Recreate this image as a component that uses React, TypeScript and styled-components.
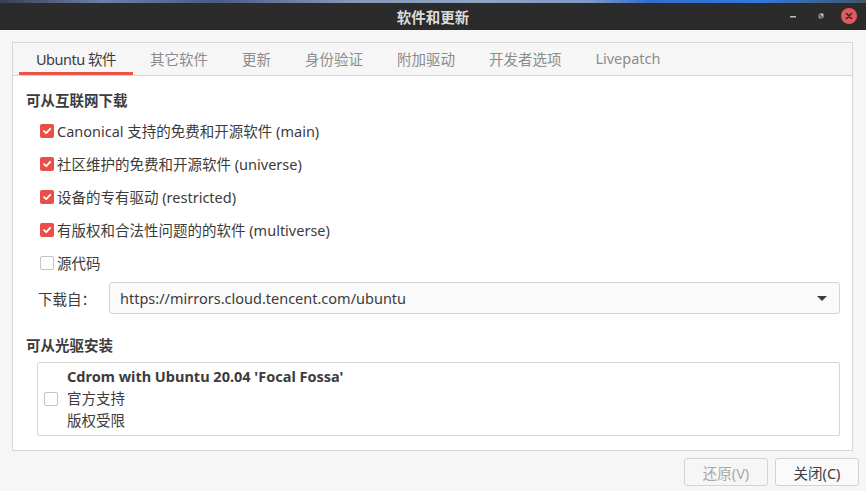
import React from "react";
import styled, { createGlobalStyle } from "styled-components";

const Global = createGlobalStyle`
  html, body { margin: 0; padding: 0; background: #f6f6f6; }
  body { font-family: "Noto Sans", "Noto Sans CJK SC", sans-serif; }
  #root { width: 866px; height: 491px; overflow: hidden; }
`;

const Win = styled.div`
  width: 866px;
  height: 491px;
  display: flex;
  flex-direction: column;
  background: #f6f6f6;
  font-family: "Noto Sans", "Noto Sans CJK SC", sans-serif;
  font-size: 14.5px;
  color: #3c3c3c;
`;

const Desktop = styled.div`
  height: 3px;
  background: linear-gradient(90deg, #3a3f55 0%, #6d7fa8 12%, #4a5a86 25%, #8796b5 40%, #8fa5c2 55%, #7f99c6 68%, #2f6fcf 75%, #3478d9 88%, #40566c 100%);
`;

const TitleBar = styled.div`
  height: 27px;
  background: #2b2b2b;
  position: relative;
  display: flex;
  align-items: center;
  justify-content: center;
`;

const Title = styled.div`
  color: #dcdcdc;
  font-family: "Noto Sans CJK SC", sans-serif;
  font-weight: 700;
  font-size: 14.5px;
`;

const Controls = styled.div`
  position: absolute;
  right: 9px;
  top: 4px;
  display: flex;
  align-items: center;
  gap: 12px;
  height: 18px;
`;

const Ctl = styled.div`
  width: 16px;
  height: 16px;
  display: flex;
  align-items: center;
  justify-content: center;
`;

const CloseBtn = styled.div`
  width: 16px;
  height: 16px;
  border-radius: 50%;
  background: #e25a5f;
  display: flex;
  align-items: center;
  justify-content: center;
`;

const Body = styled.div`
  flex: 1;
  display: flex;
  flex-direction: column;
  padding: 12px 7px 0 12px;
`;

const Notebook = styled.div`
  height: 407px;
  margin-right: 6px;
  border: 1px solid #d6d6d6;
  display: flex;
  flex-direction: column;
  background: #ffffff;
`;

const TabStrip = styled.div`
  height: 32px;
  background: #f6f6f6;
  border-bottom: 1px solid #d6d6d6;
  display: flex;
  padding-left: 6px;
`;

const Tab = styled.div<{ $active?: boolean }>`
  padding: 0 17px 2px;
  display: flex;
  align-items: center;
  font-size: 14.5px;
  color: ${(p) => (p.$active ? "#3c3c3c" : "#8c8c8c")};
  box-shadow: ${(p) => (p.$active ? "inset 0 -3px 0 #ed5448" : "none")};
  letter-spacing: ${(p) => (p.$active ? "-0.5px" : "0")};
`;

const Page = styled.div`
  flex: 1;
  display: flex;
  flex-direction: column;
  padding: 13px 12px 0 13px;
`;

const Heading = styled.div`
  font-weight: 700;
  font-size: 14.5px;
  color: #3c3c3c;
  height: 22px;
  line-height: 22px;
`;

const Options = styled.div`
  display: flex;
  flex-direction: column;
  padding-left: 14px;
  padding-top: 3px;
`;

const OptRow = styled.div`
  height: 33px;
  display: flex;
  align-items: center;
  gap: 3px;
`;

const Box = styled.div<{ $on?: boolean }>`
  width: 14px;
  height: 14px;
  box-sizing: border-box;
  border-radius: 2px;
  background: ${(p) => (p.$on ? "#ea4f47" : "#ffffff")};
  border: ${(p) => (p.$on ? "none" : "1px solid #c4c4c4")};
  display: flex;
  align-items: center;
  justify-content: center;
  flex: none;
`;

const SourceRow = styled.div`
  display: flex;
  align-items: center;
  margin-top: 3px;
  height: 32px;
  padding-left: 12px;
  gap: 14px;
`;

const Label = styled.div`
  width: 57px;
  white-space: nowrap;
`;

const Combo = styled.div`
  flex: 1;
  height: 32px;
  box-sizing: border-box;
  border: 1px solid #d3d3d3;
  border-radius: 3px;
  background: #fafafa;
  display: flex;
  align-items: center;
  padding: 0 10px 0 10px;
  justify-content: space-between;
`;

const Arrow = styled.div`
  width: 0;
  height: 0;
  border-left: 5px solid transparent;
  border-right: 5px solid transparent;
  border-top: 5px solid #3c3c3c;
  margin-right: 2px;
`;

const Heading2 = styled(Heading)`
  margin-top: 20px;
`;

const CdBox = styled.div`
  margin: 6px 0 0 11px;
  height: 74px;
  box-sizing: border-box;
  border: 1px solid #d6d6d6;
  border-radius: 2px;
  display: flex;
  align-items: center;
  padding-left: 6px;
  gap: 9px;
`;

const CdLines = styled.div`
  display: flex;
  flex-direction: column;
  line-height: 22px;
  padding-bottom: 3px;
`;

const Bold = styled.div`
  font-weight: 700;
`;

const ButtonRow = styled.div`
  display: flex;
  justify-content: flex-end;
  gap: 7px;
  padding-top: 7px;
`;

const Btn = styled.button<{ $disabled?: boolean }>`
  width: 84px;
  height: 28px;
  box-sizing: border-box;
  border: 1px solid #d3d3d3;
  border-radius: 3px;
  background: ${(p) => (p.$disabled ? "#f6f6f6" : "#fafafa")};
  color: ${(p) => (p.$disabled ? "#a8a8a8" : "#3c3c3c")};
  font-family: "Noto Sans", "Noto Sans CJK SC", sans-serif;
  font-size: 14.5px;
  padding: 0;
`;

const Check = () => (
  <svg width="10" height="10" viewBox="0 0 10 10">
    <path d="M2 5.2 L4.2 7.2 L8.2 2.8" stroke="#fff" strokeWidth="1.8" fill="none" strokeLinecap="round" strokeLinejoin="round" />
  </svg>
);

const tabs = ["Ubuntu 软件", "其它软件", "更新", "身份验证", "附加驱动", "开发者选项", "Livepatch"];
const opts: [string, boolean][] = [
  ["Canonical 支持的免费和开源软件 (main)", true],
  ["社区维护的免费和开源软件 (universe)", true],
  ["设备的专有驱动 (restricted)", true],
  ["有版权和合法性问题的的软件 (multiverse)", true],
  ["源代码", false],
];

export default function App() {
  return (
    <Win>
      <Global />
      <Desktop />
      <TitleBar>
        <Title>软件和更新</Title>
        <Controls>
          <Ctl>
            <svg width="10" height="10" viewBox="0 0 10 10"><rect x="2" y="5" width="6" height="1.5" fill="#bdbdbd" /></svg>
          </Ctl>
          <Ctl>
            <svg width="10" height="10" viewBox="0 0 10 10"><path d="M3 2.5 L7.5 2.5 L7.5 7 Z" fill="#bdbdbd" /><path d="M2.5 3 L2.5 7.5 L7 7.5 Z" fill="#8a8a8a" /></svg>
          </Ctl>
          <CloseBtn>
            <svg width="8" height="8" viewBox="0 0 8 8"><path d="M1.5 1.5 L6.5 6.5 M6.5 1.5 L1.5 6.5" stroke="#2b2b2b" strokeWidth="1.6" strokeLinecap="round" /></svg>
          </CloseBtn>
        </Controls>
      </TitleBar>
      <Body>
        <Notebook>
          <TabStrip>
            {tabs.map((t, i) => (
              <Tab key={t} $active={i === 0}>{t}</Tab>
            ))}
          </TabStrip>
          <Page>
            <Heading>可从互联网下载</Heading>
            <Options>
              {opts.map(([t, on]) => (
                <OptRow key={t}>
                  <Box $on={on}>{on && <Check />}</Box>
                  <span>{t}</span>
                </OptRow>
              ))}
            </Options>
            <SourceRow>
              <Label>下载自：</Label>
              <Combo>
                <span>https://mirrors.cloud.tencent.com/ubuntu</span>
                <Arrow />
              </Combo>
            </SourceRow>
            <Heading2>可从光驱安装</Heading2>
            <CdBox>
              <Box />
              <CdLines>
                <Bold>Cdrom with Ubuntu 20.04 'Focal Fossa'</Bold>
                <span>官方支持</span>
                <span>版权受限</span>
              </CdLines>
            </CdBox>
          </Page>
        </Notebook>
        <ButtonRow>
          <Btn $disabled>还原(V)</Btn>
          <Btn>关闭(C)</Btn>
        </ButtonRow>
      </Body>
    </Win>
  );
}
